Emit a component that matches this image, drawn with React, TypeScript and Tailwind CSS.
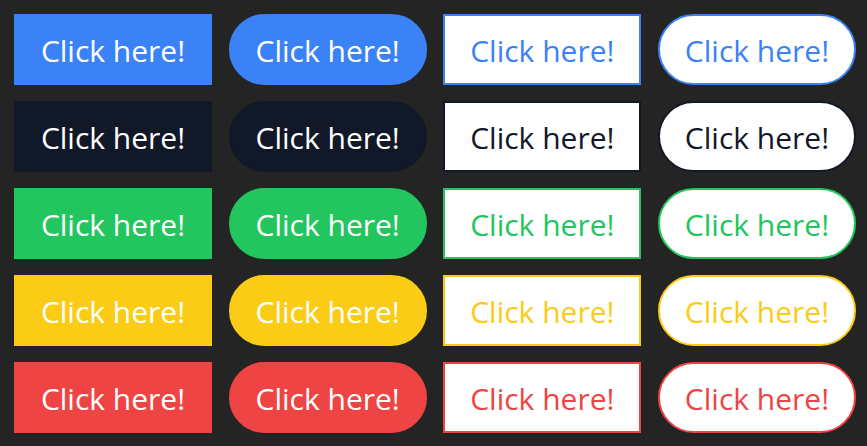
import React from "react";

const variants = [
  {
    solid: "bg-[#3b82f6] border-[#3b82f6]",
    outline: "text-[#3b82f6] border-[#3b82f6]",
  },
  {
    solid: "bg-[#111827] border-[#111827]",
    outline: "text-[#111827] border-[#111827]",
  },
  {
    solid: "bg-[#22c55e] border-[#22c55e]",
    outline: "text-[#22c55e] border-[#22c55e]",
  },
  {
    solid: "bg-[#facc15] border-[#facc15]",
    outline: "text-[#facc15] border-[#facc15]",
  },
  {
    solid: "bg-[#ef4444] border-[#ef4444]",
    outline: "text-[#ef4444] border-[#ef4444]",
  },
];

const base =
  "w-[198px] h-[71px] pt-[3px] flex items-center justify-center border-2 text-[30px] leading-none";

const App = () => {
  return (
    <div
      className="w-full min-h-screen bg-[#242424] p-[14px] grid grid-cols-[198px_198px_198px_198px] gap-x-[16.67px] gap-y-4 content-start"
      style={{ fontFamily: '"Open Sans", "Noto Sans", sans-serif' }}
    >
      {variants.map((v, index) => (
        <React.Fragment key={index + 1}>
          <button className={`${base} ${v.solid} text-white`}>Click here!</button>
          <button className={`${base} ${v.solid} text-white rounded-full`}>Click here!</button>
          <button className={`${base} ${v.outline} bg-white`}>Click here!</button>
          <button className={`${base} ${v.outline} bg-white rounded-full`}>Click here!</button>
        </React.Fragment>
      ))}
    </div>
  );
};

export default App;
